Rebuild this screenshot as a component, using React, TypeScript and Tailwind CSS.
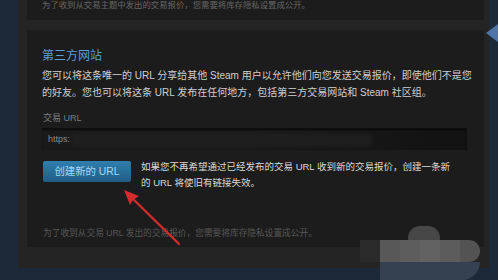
import React from 'react';

const FONT = '"Liberation Sans", "Noto Sans CJK SC", sans-serif';

export default function App() {
  return (
    <div
      className="relative flex h-[280px] w-[498px] overflow-hidden bg-[#1b2939]"
      style={{ fontFamily: FONT }}
    >
      {/* left page gutter */}
      <div className="w-[18px] shrink-0" />

      {/* outer container */}
      <div className="flex h-[268px] w-[471px] shrink-0 flex-col gap-[10px] bg-[#242424] pl-[9px] pr-[5px]">
        {/* previous panel, cut off at the top */}
        <div className="h-[20px] bg-[#1c1c1c] pl-[15px]">
          <p className="text-[8.4px] leading-[10px] text-[#666]">
            为了收到从交易主题中发出的交易报价，您需要将库存隐私设置成公开。
          </p>
        </div>

        {/* third party sites */}
        <div className="flex h-[217px] flex-col bg-[#1c1c1c] pl-[15px] pr-[4px] pt-[18px]">
          <h2 className="text-[12px] leading-[16px] text-[#5a9fd6]">第三方网站</h2>
          <div className="mt-[3px] flex flex-col whitespace-nowrap text-[10px] leading-[17px] text-[#cfcfcf]">
            <span>您可以将这条唯一的 URL 分享给其他 Steam 用户以允许他们向您发送交易报价，即使他们不是您</span>
            <span>的好友。您也可以将这条 URL 发布在任何地方，包括第三方交易网站和 Steam 社区组。</span>
          </div>

          <div className="mt-[10px] pl-[1px] text-[9px] leading-[14px] text-[#7c7c7c]">交易 URL</div>
          <div className="mt-[3px] flex h-[22px] w-[425px] items-center border-t border-[#0e0e0e] bg-gradient-to-r from-[#1a1a1a] via-[#1a1a1a] to-[#121212] pl-[6px] shadow-[inset_0_1px_2px_rgba(0,0,0,0.6)]">
            <span className="text-[9px] text-[#8a8a8a]">https:</span>
            <span className="ml-[2px] h-[12px] w-[300px] bg-[#1f1f1f] blur-[2px]" />
          </div>

          <div className="mt-[9px] flex items-start gap-[10px] pl-[1px]">
            <button className="mt-[2px] h-[21px] w-[88px] shrink-0 rounded-[2px] bg-gradient-to-b from-[#2f7fae] to-[#215d86] text-[10.4px] leading-[21px] text-[#a6d8f5]">
              创建新的 URL
            </button>
            <div className="flex flex-col whitespace-nowrap text-[9.5px] leading-[16px] text-[#d9d9d9]">
              <span>如果您不再希望通过已经发布的交易 URL 收到新的交易报价，创建一条新</span>
              <span>的 URL 将使旧有链接失效。</span>
            </div>
          </div>

          <p className="mt-[36px] pl-[1px] text-[8.7px] leading-[12px] text-[#585858]">
            为了收到从交易 URL 发出的交易报价，您需要将库存隐私设置成公开。
          </p>
        </div>
      </div>

      {/* right side nav arrow */}
      <div className="w-[9px] shrink-0" />
      <svg className="absolute left-[486px] top-[24px]" width="12" height="18" viewBox="0 0 12 18">
        <path d="M0 9 L12 0 L12 18 Z" fill="#4f74a8" />
      </svg>

      {/* red annotation arrow */}
      <svg className="absolute left-0 top-0" width="498" height="280" viewBox="0 0 498 280">
        <line x1="179" y1="244" x2="131" y2="197" stroke="#d12b2b" strokeWidth="2.4" strokeLinecap="round" />
        <path d="M124 190 L139 196 L133 200 L130 205 Z" fill="#d12b2b" />
      </svg>

      {/* pixelated watermark */}
      <div className="absolute left-[408px] top-[226px] h-[24px] w-[32px] rounded-full bg-[#474747]" />
      <div className="absolute left-[360px] top-[240px] h-[22px] w-[20px] bg-[#2a2a2a]" />
      <div className="absolute left-[380px] top-[240px] flex h-[22px] w-[100px] overflow-hidden rounded-r-full">
        <div className="w-[20px] bg-[#585858]" />
        <div className="w-[20px] bg-[#5d5d5d]" />
        <div className="w-[20px] bg-[#626262]" />
        <div className="w-[20px] bg-[#5c5c5c]" />
        <div className="w-[20px] bg-[#535353]" />
      </div>
      <div className="absolute left-[380px] top-[262px] h-[18px] w-[100px] rounded-br-full bg-[#354150]" />
    </div>
  );
}
